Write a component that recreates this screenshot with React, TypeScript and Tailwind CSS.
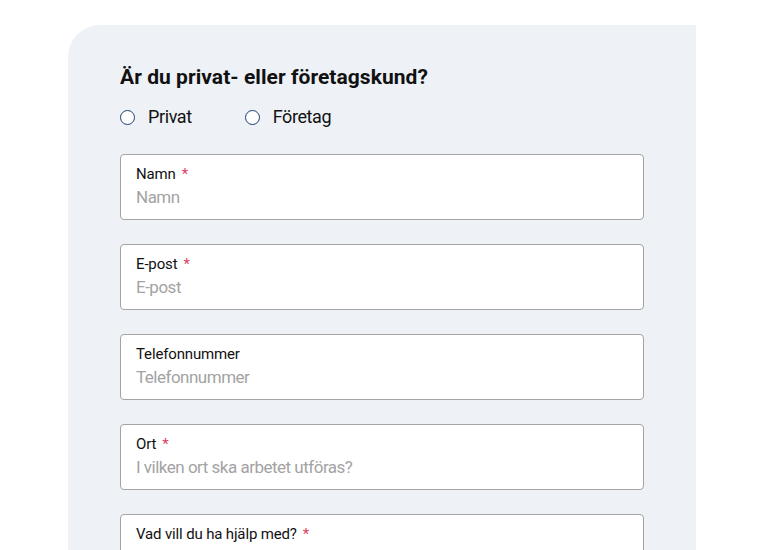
import React from "react";

const font = { fontFamily: '"Liberation Sans Narrow", "Roboto", "Liberation Sans", sans-serif' };

function Field({ label, placeholder, required }: { label: string; placeholder?: string; required?: boolean }) {
  return (
    <div className="flex h-[66px] w-[524px] flex-col rounded-[4px] border border-[#a3a3a3] bg-white px-[15px] pt-[9px]">
      <div className="flex text-[15px] leading-[20px] tracking-[-0.15px] text-[#111]">
        <span>{label}</span>
        {required && <span className="ml-[6px] text-[#d9415f]">*</span>}
      </div>
      {placeholder && (
        <div className="mt-[3px] text-[17px] leading-[20px] tracking-[-0.5px] text-[#a3a3a3]">{placeholder}</div>
      )}
    </div>
  );
}

function Radio({ label }: { label: string }) {
  return (
    <label className="flex items-center gap-[13px]">
      <span className="h-[15px] w-[15px] rounded-full border-[1.5px] border-[#1f3f6e] bg-white" />
      <span className="text-[18px] leading-[22px] tracking-[-0.4px] text-[#111]">{label}</span>
    </label>
  );
}

export default function App() {
  return (
    <div className="h-[550px] w-[779px] overflow-hidden bg-white pt-[25px]" style={font}>
      <div className="ml-[68px] h-[600px] w-[628px] rounded-tl-[32px] bg-[#eef2f7] pl-[52px] pt-[38px]">
        <h2 className="text-[21px] font-bold leading-[28px] tracking-[0.05px] text-[#111]">
          Är du privat- eller företagskund?
        </h2>
        <div className="mt-[15px] flex gap-[53px]">
          <Radio label="Privat" />
          <Radio label="Företag" />
        </div>
        <div className="mt-[26px] flex flex-col gap-[24px]">
          <Field label="Namn" placeholder="Namn" required />
          <Field label="E-post" placeholder="E-post" required />
          <Field label="Telefonnummer" placeholder="Telefonnummer" />
          <Field label="Ort" placeholder="I vilken ort ska arbetet utföras?" required />
          <Field label="Vad vill du ha hjälp med?" required />
        </div>
      </div>
    </div>
  );
}
